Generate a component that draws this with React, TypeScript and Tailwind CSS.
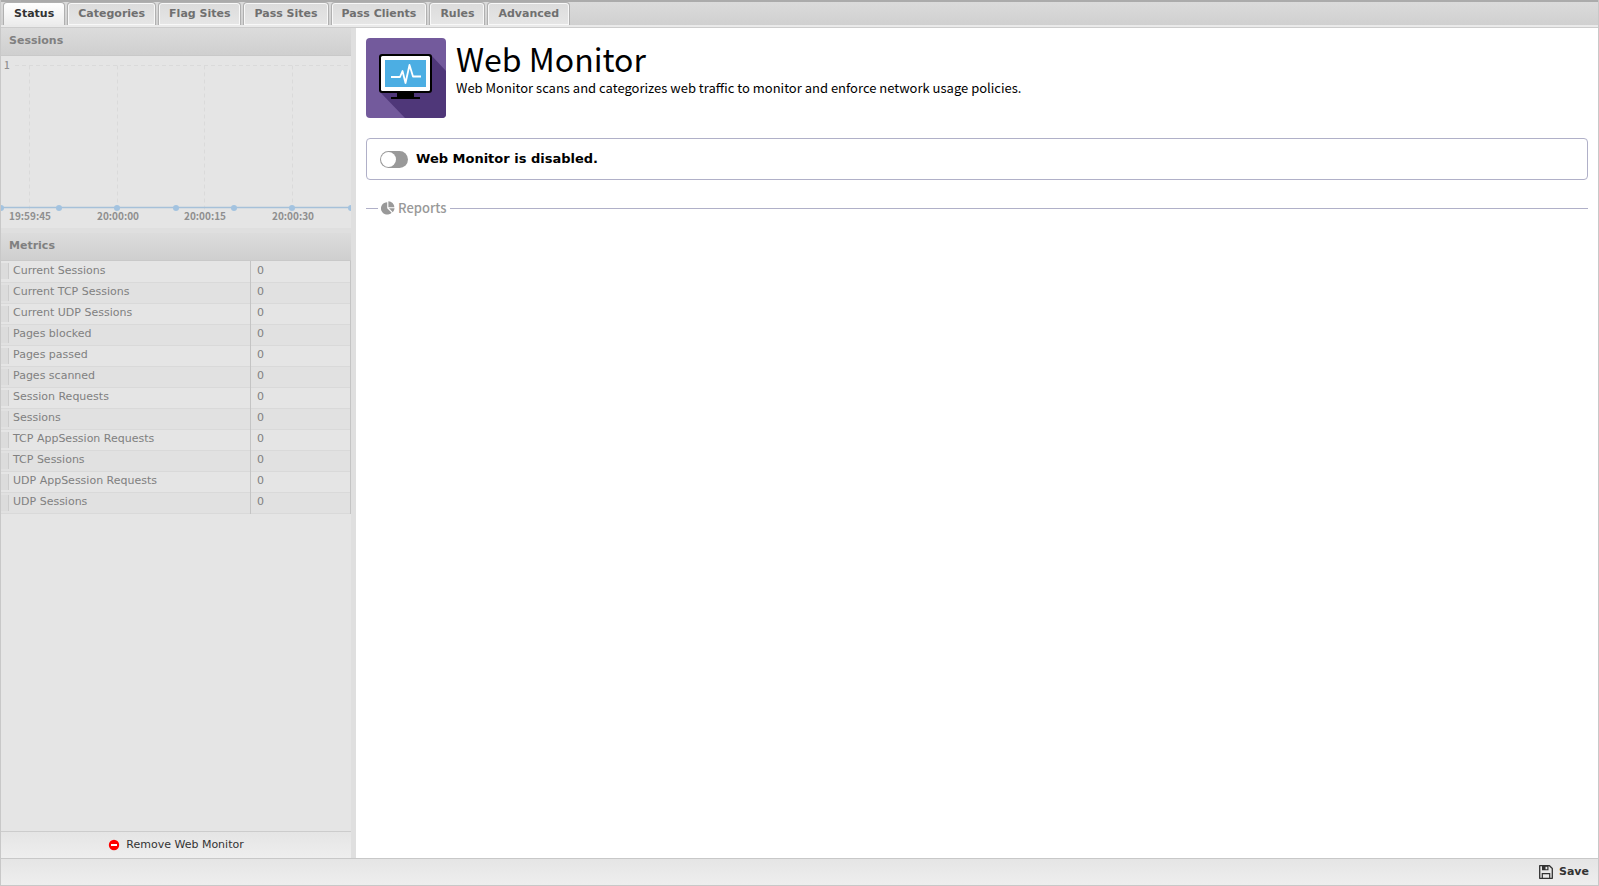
import React, { useState } from "react";

type Metric = {
  name: string;
  value: number;
};

const tabs = [
  "Status",
  "Categories",
  "Flag Sites",
  "Pass Sites",
  "Pass Clients",
  "Rules",
  "Advanced",
];

const metrics: Metric[] = [
  { name: "Current Sessions", value: 0 },
  { name: "Current TCP Sessions", value: 0 },
  { name: "Current UDP Sessions", value: 0 },
  { name: "Pages blocked", value: 0 },
  { name: "Pages passed", value: 0 },
  { name: "Pages scanned", value: 0 },
  { name: "Session Requests", value: 0 },
  { name: "Sessions", value: 0 },
  { name: "TCP AppSession Requests", value: 0 },
  { name: "TCP Sessions", value: 0 },
  { name: "UDP AppSession Requests", value: 0 },
  { name: "UDP Sessions", value: 0 },
];

const ticks = [
  { x: 28, label: "19:59:45" },
  { x: 116, label: "20:00:00" },
  { x: 203, label: "20:00:15" },
  { x: 291, label: "20:00:30" },
];

const points = [0, 58, 116, 175, 233, 291, 350];

const PanelHeader = ({ title }: { title: string }) => (
  <h2 className="flex h-7 items-center border-b border-[#c9c9c9] bg-linear-to-b from-[#dcdcdc] to-[#cfcfcf] px-2 text-[11px] font-bold text-[#808080]">
    {title}
  </h2>
);

const SessionsChart = () => (
  <svg viewBox="0 0 350 172" className="block w-full bg-[#e5e5e5]">
    <g stroke="#dadada" strokeDasharray="4 3">
      <line x1="14" y1="9.5" x2="350" y2="9.5" />
      {ticks.map((tick) => (
        <line key={tick.x} x1={tick.x + 0.5} y1="9.5" x2={tick.x + 0.5} y2="155" />
      ))}
    </g>
    <line x1="0" y1="151.5" x2="350" y2="151.5" stroke="#a6c1d9" strokeWidth="1.5" />
    {points.map((x) => (
      <circle key={x} cx={x} cy="152" r="3" fill="#a3c3e0" />
    ))}
    <text
      x="3"
      y="13"
      fontSize="10"
      fill="#8f8f8f"
      className="font-['Noto_Sans_CJK_SC',sans-serif] font-medium"
    >
      1
    </text>
    {ticks.map((tick) => (
      <text
        key={tick.label}
        x={tick.x + 1}
        y="164"
        textAnchor="middle"
        fontSize="10"
        fill="#8f8f8f"
        className="font-['Noto_Sans_CJK_SC',sans-serif] font-bold"
      >
        {tick.label}
      </text>
    ))}
  </svg>
);

const MetricsTable = () => (
  <table className="w-full table-fixed border-collapse text-[11px] text-[#808080]">
    <tbody>
      {metrics.map((metric) => (
        <tr
          key={metric.name}
          className="h-[21px] border-b border-[#d9d9d9] even:bg-[#e1e1e1]"
        >
          <td className="w-2 p-0">
            <div className="h-4 border-r border-[#cccccc] bg-[#dcdcdc]" />
          </td>
          <th scope="row" className="border-r border-[#c4c4c4] p-0 pl-1 text-left font-normal">
            {metric.name}
          </th>
          <td className="w-[100px] border-r border-[#c4c4c4] p-0 pl-1.5">{metric.value}</td>
        </tr>
      ))}
    </tbody>
  </table>
);

const AppIcon = () => (
  <svg viewBox="0 0 80 80" className="size-20 shrink-0" aria-hidden="true">
    <clipPath id="tile">
      <rect width="80" height="80" rx="4" />
    </clipPath>
    <g clipPath="url(#tile)">
      <rect width="80" height="80" fill="#735a9c" />
      <path d="M65 17 L80 33 V80 H39 L14 54 Z" fill="#4f3779" />
    </g>
    <path d="M31 54 H48 V59 H54 V61 H25 V59 H31 Z" fill="#000" />
    <rect x="13" y="16" width="53" height="39" rx="3" fill="#000" />
    <rect x="15" y="18" width="49" height="35" rx="1.5" fill="#fff" />
    <rect x="19" y="22" width="41" height="27" fill="#4caee3" />
    <path
      d="M25 39 H34 L36.500 33 L39.500 45 L43.500 27 L47 38.500 H55"
      fill="none"
      stroke="#fff"
      strokeWidth="1.800"
      strokeLinejoin="round"
    />
  </svg>
);

const PieIcon = () => (
  <svg viewBox="0 0 14 14" className="size-3.5" fill="currentColor" aria-hidden="true">
    <path d="M6.200 1.200 V7.300 L10.600 11.700 A6.200 6.200 0 1 1 6.200 1.200 Z" />
    <path d="M7.400 0.300 A6.200 6.200 0 0 1 13.400 6.200 H7.400 Z" />
    <path d="M8 7.300 H13.600 A6.200 6.200 0 0 1 11.800 11.200 Z" />
  </svg>
);

const SaveIcon = () => (
  <svg viewBox="0 0 14 14" className="size-3.5" aria-hidden="true">
    <path
      d="M0.700 0.700 H10.500 L13.300 3.500 V13.300 H0.700 Z"
      fill="none"
      stroke="#333"
      strokeWidth="1.300"
      strokeLinejoin="round"
    />
    <path d="M3 1 H9.500 V5.300 H3 Z M6.500 1.800 V4.300 H8.300 V1.800 Z" fill="#333" fillRule="evenodd" />
    <path d="M3.300 13 V8.700 H10.700 V13" fill="none" stroke="#333" strokeWidth="1.200" />
  </svg>
);

export default function App() {
  const [active, setActive] = useState("Status");
  const [enabled, setEnabled] = useState(false);

  return (
    <div className="flex h-screen flex-col border-x border-b border-[#c8c8c8] bg-[#dfdfdf] font-['DejaVu_Sans',Verdana,sans-serif]">
      <nav
        role="tablist"
        className="flex h-[25px] shrink-0 items-end gap-0.5 border-t-2 border-[#ababab] bg-linear-to-b from-[#dbdbdb] to-[#d0d0d0] pl-0.5"
      >
        {tabs.map((tab) => (
          <button
            key={tab}
            role="tab"
            aria-selected={tab === active}
            onClick={() => setActive(tab)}
            className={
              tab === active
                ? "h-[23px] rounded-t-sm border border-b-0 border-[#b0b0b0] bg-linear-to-b from-white to-[#ececec] px-2.5 text-[11px] font-bold text-[#333333]"
                : "h-[23px] rounded-t-sm border border-b-0 border-[#b0b0b0] bg-linear-to-b from-[#dcdcdc] to-[#e6e6e6] px-2.5 text-[11px] font-bold text-[#707070] inset-ring inset-ring-[#f8f8f8]"
            }
          >
            {tab}
          </button>
        ))}
      </nav>
      <div className="h-[3px] shrink-0 border-b border-[#cccccc] bg-[#eaeaea]" />

      <div className="flex min-h-0 flex-1">
        <aside className="mr-[5px] flex w-[350px] shrink-0 flex-col bg-[#e5e5e5]">
          <PanelHeader title="Sessions" />
          <SessionsChart />
          <div className="h-[5px] bg-[#dfdfdf]" />
          <PanelHeader title="Metrics" />
          <MetricsTable />
          <button className="mt-auto flex h-[27px] items-center justify-center gap-1.5 border-t border-[#cccccc] bg-linear-to-b from-[#e5e5e5] to-[#eeeeee] text-[11px] text-[#333333]">
            <svg viewBox="0 0 12 12" className="size-3" aria-hidden="true">
              <circle cx="6" cy="6" r="5.200" fill="#ff0000" />
              <rect x="3" y="5" width="6" height="2" fill="#fff" />
            </svg>
            Remove Web Monitor
          </button>
        </aside>

        <main className="min-w-0 flex-1 bg-white p-2.5 font-['Noto_Sans_CJK_SC',sans-serif] text-black">
          <header className="flex gap-2.5">
            <AppIcon />
            <div>
              <h1 className="text-[32px] leading-10">Web Monitor</h1>
              <p className="text-[13px] leading-5">
                Web Monitor scans and categorizes web traffic to monitor and enforce network
                usage policies.
              </p>
            </div>
          </header>

          <section className="mt-5 flex h-[42px] items-center rounded border border-[#b0b0c8] px-[13px]">
            <label className="flex items-center gap-2 font-['DejaVu_Sans',sans-serif] text-[13px] font-bold">
              <input
                type="checkbox"
                role="switch"
                checked={enabled}
                onChange={(e) => setEnabled(e.target.checked)}
                className="h-[17px] w-7 appearance-none rounded-full bg-[#999999] p-px before:block before:size-[15px] before:rounded-full before:bg-white checked:bg-green-600 checked:before:ml-auto"
              />
              Web Monitor is {enabled ? "enabled" : "disabled"}.
            </label>
          </section>

          <fieldset className="mt-[18px] border-t border-[#b0b0c8]">
            <legend className="ml-3 flex items-center gap-[3px] px-[3px] text-[13px] leading-5 font-medium text-[#999999]">
              <PieIcon />
              Reports
            </legend>
          </fieldset>
        </main>
      </div>

      <footer className="flex h-[27px] shrink-0 items-center justify-end border-t border-[#c8c8c8] bg-linear-to-b from-[#e5e5e5] to-[#eeeeee] pr-[9px]">
        <button className="flex items-center gap-1.5 text-[11px] font-bold text-[#333333]">
          <SaveIcon />
          Save
        </button>
      </footer>
    </div>
  );
}
